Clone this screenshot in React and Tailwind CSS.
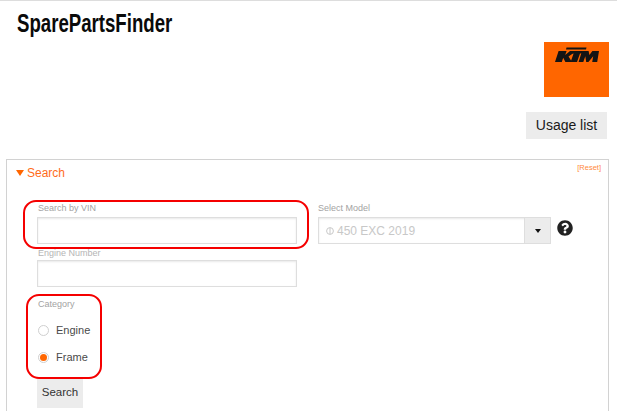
import React from "react";
import { FaQuestionCircle } from "react-icons/fa";

const sans = { fontFamily: '"Liberation Sans", Arial, sans-serif' };
const inputShadow = "shadow-[inset_0_1px_2px_rgba(0,0,0,0.09)]";

function KtmLogo() {
  return (
    <div className="w-[65px] h-[55px] bg-[#ff6600] flex justify-center pt-[5px]">
      <svg width="44" height="16" viewBox="0 0 44 16" fill="#141414">
        {/* K */}
        <path d="M3.6 4h8l-1.4 4L15 4h6.5l-8 5.4L17 15h-6.6l-2.2-4.2L6.8 15H0z" />
        {/* T with its long top bar */}
        <path d="M11.5 0.6h20l-.5 2H11zM18 4h11l-.7 2.4H25L22 15h-6.4l3-8.6h-1.3z" />
        {/* M */}
        <path d="M27 4h6.6l.8 4L37.4 4H44l-1.8 11h-5l1-5.8-4.8 5.8h-2.2l-.9-5.8-2 5.8h-4.7z" />
      </svg>
    </div>
  );
}

function Label({ children, className = "" }) {
  return <div className={`text-[9px] leading-[12px] text-[#a3a3a3] ${className}`}>{children}</div>;
}

function Radio({ label, checked }) {
  return (
    <div className="flex items-center h-[27px]">
      <span className="w-[11px] h-[11px] rounded-full border border-[#cfcfcf] bg-white flex items-center justify-center">
        {checked && <span className="w-[7px] h-[7px] rounded-full bg-[#ff6600]" />}
      </span>
      <span className="ml-[7px] text-[11px] text-[#4a4a4a]">{label}</span>
    </div>
  );
}

export default function App() {
  return (
    <div className="w-[640px] h-[411px] overflow-hidden bg-white" style={sans}>
      <div className="w-[617px] h-[411px] border-t border-[#dddddd] relative">
        <h1 className="ml-[17px] pt-[9px] text-[25px] leading-[27px] text-[#0a0a0a] font-bold origin-left scale-x-[0.745]">
          SparePartsFinder
        </h1>

        {/* Logo and usage list */}
        <div className="flex justify-end pr-[8px] mt-[5px]">
          <KtmLogo />
        </div>
        <div className="flex justify-end pr-[10px] mt-[15px]">
          <button className="w-[81px] h-[27px] bg-[#ececec] text-[14px] text-[#1a1a1a]">Usage list</button>
        </div>

        {/* Search panel */}
        <div className="relative ml-[6px] mr-[8px] mt-[20px] h-[260px] border border-[#d2d2d2] border-b-0">
          <div className="flex justify-between items-start pl-[9px] pr-[7px] pt-[6px]">
            <div className="flex items-center text-[12px] leading-[14px] text-[#ff6c1a]">
              <span className="w-0 h-0 mr-[3px] border-x-[4px] border-x-transparent border-t-[6px] border-t-[#ff6600]" />
              Search
            </div>
            <a className="-mt-[3px] text-[7.5px] leading-[10px] text-[#ff8a42]">[Reset]</a>
          </div>

          <div className="flex mt-[22px] pl-[30px]">
            <div className="w-[260px]">
              <Label className="pl-[1px]">Search by VIN</Label>
              <div className={`h-[27px] mt-[3px] border border-[#dedede] ${inputShadow}`} />
              <Label className="pl-[1px] mt-[3px] h-[13px] text-[#b5b5b5]">Engine Number</Label>
              <div className={`h-[27px] border border-[#dedede] ${inputShadow}`} />
            </div>
            <div className="ml-[21px]">
              <Label>Select Model</Label>
              <div className="flex items-start mt-[3px]">
                <div className={`w-[233px] h-[27px] flex border border-[#dedede] ${inputShadow}`}>
                  <div className="flex-1 flex items-center pl-[7px] text-[12px] text-[#c8c8c8]">
                    <svg width="8" height="8" viewBox="0 0 8 8" fill="none" stroke="#c8c8c8" className="mr-[3px]">
                      <circle cx="4" cy="4" r="3.4" />
                      <path d="M4 1v6" />
                    </svg>
                    450 EXC 2019
                  </div>
                  <div className="w-[26px] bg-[#ececec] border-l border-[#dedede] flex items-center justify-center">
                    <span className="w-0 h-0 border-x-[3.5px] border-x-transparent border-t-[4px] border-t-[#111111]" />
                  </div>
                </div>
                <FaQuestionCircle className="ml-[6px] mt-[3px] text-[#222222]" size={16} />
              </div>
            </div>
          </div>

          <div className="pl-[31px] mt-[11px]">
            <Label>Category</Label>
          </div>
          <div className="pl-[31px] mt-[7px]">
            <Radio label="Engine" />
            <Radio label="Frame" checked />
          </div>
          <div className="pl-[30px] mt-[7px]">
            <button className="w-[46px] h-[30px] bg-[#ececec] text-[11.5px] text-[#333333]">Search</button>
          </div>

          {/* Red annotation frames */}
          <div className="absolute left-[16px] top-[40px] w-[286px] h-[49px] border-[2px] border-[#f50000] rounded-[13px]" />
          <div className="absolute left-[19px] top-[134px] w-[76px] h-[85px] border-[2px] border-[#f50000] rounded-[13px]" />
        </div>
      </div>
    </div>
  );
}
